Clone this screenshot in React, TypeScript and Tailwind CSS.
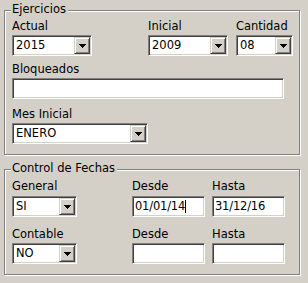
import React from "react";

const sunken =
  "border border-t-[#808080] border-l-[#808080] border-b-white border-r-white shadow-[inset_1px_1px_0_#404040,inset_-1px_-1px_0_#d4d0c8] bg-white p-[1px] h-[21px] flex items-stretch";

function Arrow() {
  return (
    <svg width="7" height="4" viewBox="0 0 7 4" shapeRendering="crispEdges">
      <rect x="0" y="0" width="7" height="1" fill="#000" />
      <rect x="1" y="1" width="5" height="1" fill="#000" />
      <rect x="2" y="2" width="3" height="1" fill="#000" />
      <rect x="3" y="3" width="1" height="1" fill="#000" />
    </svg>
  );
}

function Select({ value, w }: { value: string; w: string }) {
  return (
    <div className={`${sunken} ${w}`}>
      <div className="flex-1 flex items-center pl-[2px] leading-[13px]">{value}</div>
      <div className="w-[16px] flex items-center justify-center border border-t-[#d4d0c8] border-l-[#d4d0c8] border-b-[#404040] border-r-[#404040] shadow-[inset_1px_1px_0_#fff,inset_-1px_-1px_0_#808080] bg-[#d4d0c8]">
        <Arrow />
      </div>
    </div>
  );
}

function Input({ value, w, caret }: { value?: string; w: string; caret?: boolean }) {
  return (
    <div className={`${sunken} ${w}`}>
      <div className="flex-1 flex items-center pl-[1px] leading-[13px] tracking-[-0.2px]">
        {value}
        {caret && <span className="inline-block w-[1px] h-[13px] bg-black" />}
      </div>
    </div>
  );
}

function Label({ children }: { children: React.ReactNode }) {
  return <div className="h-[13px] leading-[13px] whitespace-nowrap">{children}</div>;
}

function Group({
  title,
  className,
  children,
}: {
  title: string;
  className: string;
  children: React.ReactNode;
}) {
  return (
    <div
      className={`relative border border-[#808080] shadow-[inset_1px_1px_0_#fff,1px_1px_0_#fff] w-[296px] pl-[7px] ${className}`}
    >
      <span className="absolute left-[6px] top-[-8px] leading-[13px] bg-[#d4d0c8] pl-[1px] pr-[2px]">
        {title}
      </span>
      {children}
    </div>
  );
}

export default function App() {
  return (
    <div
      className="w-[308px] h-[283px] bg-[#d4d0c8] pt-[10px] pl-[4px] text-[11.5px] text-black overflow-hidden"
      style={{ fontFamily: '"DejaVu Sans", Verdana, sans-serif' }}
    >
      <Group title="Ejercicios" className="h-[145px] pt-[9px]">
        <div className="flex">
          <div className="w-[80px]">
            <Label>Actual</Label>
            <div className="mt-[2px]">
              <Select value="2015" w="w-[80px]" />
            </div>
          </div>
          <div className="w-[80px] ml-[56px]">
            <Label>Inicial</Label>
            <div className="mt-[2px]">
              <Select value="2009" w="w-[80px]" />
            </div>
          </div>
          <div className="w-[57px] ml-[8px]">
            <Label>Cantidad</Label>
            <div className="mt-[2px]">
              <Select value="08" w="w-[57px]" />
            </div>
          </div>
        </div>
        <div className="mt-[7px]">
          <Label>Bloqueados</Label>
          <div className="mt-[2px]">
            <Input w="w-[272px]" />
          </div>
        </div>
        <div className="mt-[9px]">
          <Label>Mes Inicial</Label>
          <div className="mt-[2px]">
            <Select value="ENERO" w="w-[136px]" />
          </div>
        </div>
      </Group>

      <Group title="Control de Fechas" className="h-[106px] pt-[10px] mt-[14px]">
        <div className="grid grid-cols-[120px_80px_73px]">
          <div>
            <Label>General</Label>
            <div className="mt-[3px]">
              <Select value="SI" w="w-[65px]" />
            </div>
          </div>
          <div>
            <Label>Desde</Label>
            <div className="mt-[3px]">
              <Input value="01/01/14" w="w-[73px]" caret />
            </div>
          </div>
          <div>
            <Label>Hasta</Label>
            <div className="mt-[3px]">
              <Input value="31/12/16" w="w-[73px]" />
            </div>
          </div>
        </div>
        <div className="grid grid-cols-[120px_80px_73px] mt-[11px]">
          <div>
            <Label>Contable</Label>
            <div className="mt-[2px]">
              <Select value="NO" w="w-[65px]" />
            </div>
          </div>
          <div>
            <Label>Desde</Label>
            <div className="mt-[2px]">
              <Input w="w-[73px]" />
            </div>
          </div>
          <div>
            <Label>Hasta</Label>
            <div className="mt-[2px]">
              <Input w="w-[73px]" />
            </div>
          </div>
        </div>
      </Group>
    </div>
  );
}
